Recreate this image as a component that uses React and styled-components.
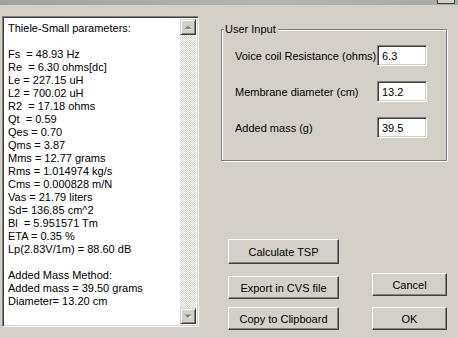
import React from 'react';
import styled, { createGlobalStyle } from 'styled-components';

const GlobalStyle = createGlobalStyle`
  html, body {
    margin: 0;
    padding: 0;
    background: #d4d0c8;
  }
  body {
    font-family: "Liberation Sans", Arial, sans-serif;
    font-size: 11px;
    color: #000;
  }
`;

const Window = styled.div`
  width: 458px;
  height: 338px;
  background: #d4d0c8;
  display: flex;
  flex-direction: column;
  overflow: hidden;
`;

const TitleStrip = styled.div`
  height: 5px;
  flex: none;
  display: flex;
  justify-content: flex-end;
  padding-right: 3px;
  background: linear-gradient(to right, #a2a2a2, #b4b4b4 60%, #a8a8a8);
`;

const CloseStub = styled.div`
  width: 16px;
  height: 3px;
  background: #d4d0c8;
  border: 1px solid #404040;
  border-top: none;
`;

const Body = styled.div`
  display: flex;
  align-items: flex-start;
  padding: 11px 0 0 2px;
`;

const ResultBox = styled.div`
  width: 197px;
  height: 311px;
  box-sizing: border-box;
  display: flex;
  background: #fff;
  border: 1px solid;
  border-color: #808080 #fff #fff #808080;
  box-shadow: inset 1px 1px #404040, inset -1px -1px #d4d0c8;
  padding: 2px;
`;

const ResultText = styled.div`
  flex: 1;
  padding: 3px 0 0 3px;
  font-size: 11px;
  line-height: 13px;
  white-space: pre;
  overflow: hidden;
`;

const Line = styled.div`
  height: 13px;
`;

const ScrollBar = styled.div`
  width: 16px;
  flex: none;
  display: flex;
  flex-direction: column;
  justify-content: space-between;
  background-color: #fff;
  background-image: conic-gradient(#fff 25%, #d4d0c8 0 50%, #fff 0 75%, #d4d0c8 0);
  background-size: 2px 2px;
`;

const ScrollButton = styled.div`
  width: 16px;
  height: 16px;
  box-sizing: border-box;
  background: #d4d0c8;
  border: 1px solid;
  border-color: #d4d0c8 #404040 #404040 #d4d0c8;
  box-shadow: inset 1px 1px #fff, inset -1px -1px #808080;
  display: flex;
  align-items: center;
  justify-content: center;
`;

const RightPanel = styled.div`
  margin-left: 22px;
  width: 226px;
  height: 314px;
  display: flex;
  flex-direction: column;
`;

const GroupBox = styled.fieldset`
  margin: 7px 0 0;
  padding: 9px 0 0 13px;
  height: 138px;
  box-sizing: border-box;
  border: 1px solid #808080;
  box-shadow: 1px 1px #fff, inset 1px 1px #fff;
  display: grid;
  grid-template-columns: 142px 52px;
  grid-auto-rows: 21px;
  row-gap: 15px;
  align-items: center;
  align-content: start;
`;

const Legend = styled.legend`
  margin-left: -11px;
  padding: 0 2px 0 1px;
  background: #d4d0c8;
  font-size: 11px;
  line-height: 13px;
`;

const FieldLabel = styled.label`
  font-size: 11px;
`;

const Field = styled.input`
  width: 50px;
  height: 21px;
  box-sizing: border-box;
  margin: 0;
  padding: 1px 4px 0;
  font-family: "Liberation Sans", Arial, sans-serif;
  font-size: 11px;
  color: #000;
  background: #fff;
  border: 1px solid;
  border-color: #808080 #fff #fff #808080;
  box-shadow: inset 1px 1px #404040, inset -1px -1px #d4d0c8;
  outline: none;
`;

const ButtonArea = styled.div`
  margin-top: auto;
  display: flex;
  justify-content: space-between;
  align-items: flex-end;
  padding: 0 0 0 7px;
`;

const ButtonColumn = styled.div`
  display: flex;
  flex-direction: column;
  gap: ${p => p.$gap || 8}px;
`;

const Button = styled.button`
  width: ${p => p.$w}px;
  height: ${p => p.$h || 23}px;
  margin: 0 0 ${p => p.$mb || 0}px;
  padding: 0;
  box-sizing: border-box;
  background: #d4d0c8;
  font-family: "Liberation Sans", Arial, sans-serif;
  font-size: 11px;
  color: #000;
  border: 1px solid;
  border-color: #fff #404040 #404040 #fff;
  box-shadow: inset -1px -1px #808080;
  cursor: pointer;
`;

const Arrow = ({ down }) => (
  <svg width="8" height="5" viewBox="0 0 8 5">
    {down ? (
      <>
        <polygon points="1.5,1 6.5,1 4,3.5" fill="#fff" transform="translate(1,1)" />
        <polygon points="0.5,0.5 7.5,0.5 4,4" fill="#808080" />
      </>
    ) : (
      <>
        <polygon points="4,1 7.5,4.5 0.5,4.5" fill="#fff" transform="translate(1,1)" />
        <polygon points="4,0.5 7.5,4 0.5,4" fill="#808080" />
      </>
    )}
  </svg>
);

const results = [
  'Thiele-Small parameters:',
  '',
  'Fs  = 48.93 Hz',
  'Re  = 6.30 ohms[dc]',
  'Le = 227.15 uH',
  'L2 = 700.02 uH',
  'R2  = 17.18 ohms',
  'Qt  = 0.59',
  'Qes = 0.70',
  'Qms = 3.87',
  'Mms = 12.77 grams',
  'Rms = 1.014974 kg/s',
  'Cms = 0.000828 m/N',
  'Vas = 21.79 liters',
  'Sd= 136.85 cm^2',
  'Bl  = 5.951571 Tm',
  'ETA = 0.35 %',
  'Lp(2.83V/1m) = 88.60 dB',
  '',
  'Added Mass Method:',
  'Added mass = 39.50 grams',
  'Diameter= 13.20 cm',
];

const inputs = [
  { label: 'Voice coil Resistance (ohms)', value: '6.3' },
  { label: 'Membrane diameter (cm)', value: '13.2' },
  { label: 'Added mass (g)', value: '39.5' },
];

export default function App() {
  return (
    <Window>
      <GlobalStyle />
      <TitleStrip>
        <CloseStub />
      </TitleStrip>
      <Body>
        <ResultBox>
          <ResultText>
            {results.map((line, i) => (
              <Line key={i}>{line}</Line>
            ))}
          </ResultText>
          <ScrollBar>
            <ScrollButton><Arrow /></ScrollButton>
            <ScrollButton><Arrow down /></ScrollButton>
          </ScrollBar>
        </ResultBox>

        <RightPanel>
          <GroupBox>
            <Legend>User Input</Legend>
            {inputs.map(item => (
              <React.Fragment key={item.label}>
                <FieldLabel>{item.label}</FieldLabel>
                <Field defaultValue={item.value} />
              </React.Fragment>
            ))}
          </GroupBox>

          <ButtonArea>
            <ButtonColumn $gap={8}>
              <Button $w={111} $h={25} $mb={4}>Calculate TSP</Button>
              <Button $w={111}>Export in CVS file</Button>
              <Button $w={111}>Copy to Clipboard</Button>
            </ButtonColumn>
            <ButtonColumn $gap={11}>
              <Button $w={75}>Cancel</Button>
              <Button $w={75}>OK</Button>
            </ButtonColumn>
          </ButtonArea>
        </RightPanel>
      </Body>
    </Window>
  );
}
